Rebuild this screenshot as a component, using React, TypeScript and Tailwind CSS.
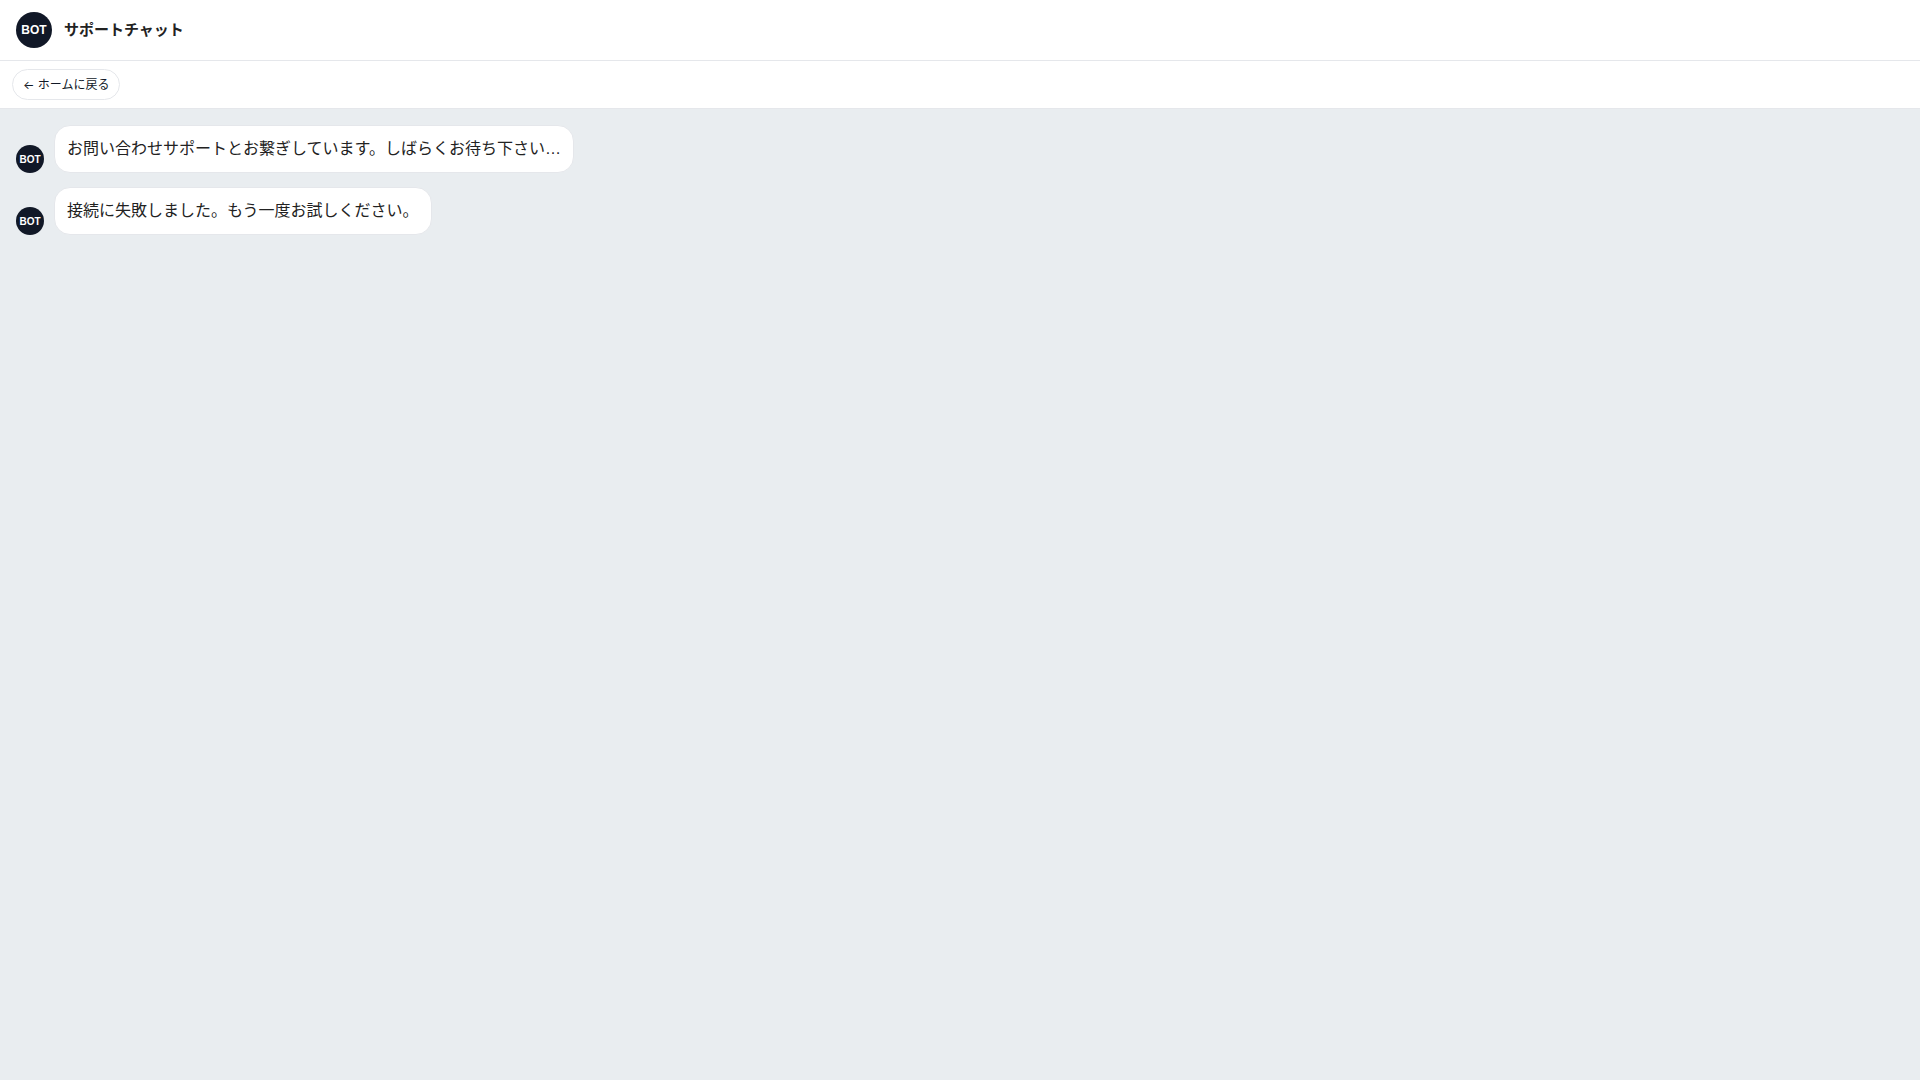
const messages = [
  { id: 1, text: "お問い合わせサポートとお繋ぎしています。しばらくお待ち下さい…" },
  { id: 2, text: "接続に失敗しました。もう一度お試しください。" },
];

export default function App() {
  return (
    <div
      lang="ja"
      className="flex min-h-screen flex-col bg-[#e9edf0] font-['Liberation_Sans','Noto_Sans_CJK_JP',sans-serif] text-[#222222]"
    >
      {/* Header */}
      <header className="flex items-center gap-3 border-b border-[#e5e7eb] bg-white px-4 py-3">
        <div className="flex size-9 items-center justify-center rounded-full bg-[#111827] text-xs font-bold text-white">
          BOT
        </div>
        <h1 className="text-[15px] font-bold">サポートチャット</h1>
      </header>

      {/* Back navigation */}
      <nav className="flex border-b border-[#e5e7eb] bg-white px-3 py-2">
        <button
          type="button"
          className="rounded-full border border-[#e5e7eb] bg-white px-[10px] py-[6px] font-['Inter','Noto_Sans_CJK_JP',sans-serif] text-xs leading-[17px] text-[#111827]"
        >
          ← ホームに戻る
        </button>
      </nav>

      {/* Messages */}
      <main className="flex flex-1 flex-col gap-[14px] p-4">
        {messages.map((message) => (
          <div key={message.id} className="flex items-end gap-[10px]">
            <div className="flex size-7 shrink-0 items-center justify-center rounded-full bg-[#111827] text-[10px] font-bold text-white">
              BOT
            </div>
            <p className="rounded-2xl border border-[#e5e7eb] bg-white px-3 py-[10px] text-base leading-[26px]">
              {message.text}
            </p>
          </div>
        ))}
      </main>
    </div>
  );
}
